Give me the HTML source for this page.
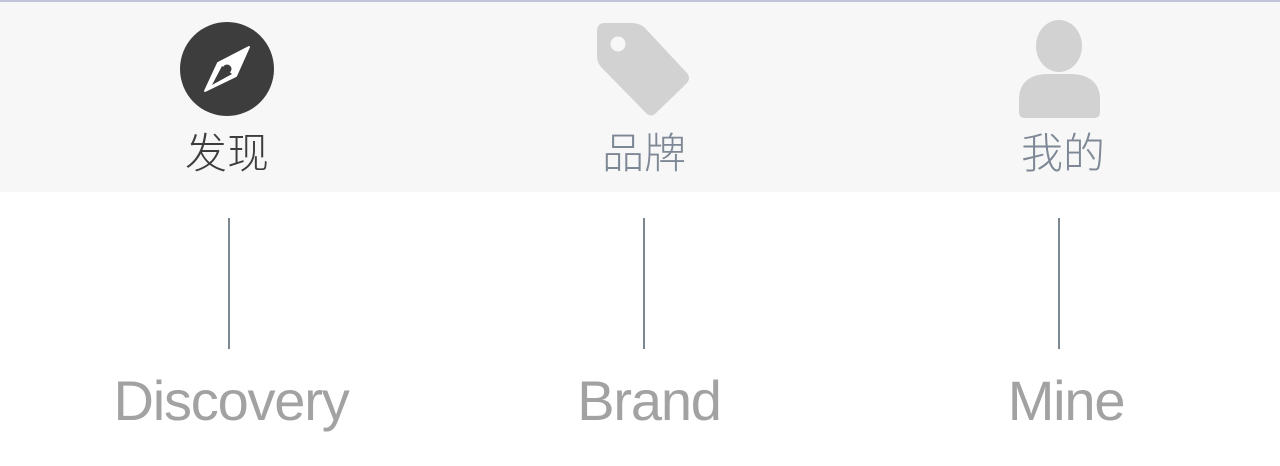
<!DOCTYPE html>
<html><head><meta charset="utf-8"><style>
body{margin:0;width:1280px;height:466px;background:#fff;position:relative;overflow:hidden;font-family:"Liberation Sans","Noto Sans CJK SC",sans-serif}
.bar{position:absolute;left:0;top:0;width:1280px;height:192px;background:#f7f7f7;border-top:2px solid #c4c4d8;box-sizing:border-box}
.cn{position:absolute;top:124px;font-size:42px;width:200px;text-align:center;line-height:60px;font-weight:300}
.en{position:absolute;top:366px;font-size:56px;width:400px;text-align:center;color:#a2a2a2;line-height:70px;letter-spacing:-1.2px}
.ln{position:absolute;top:218px;width:2px;height:131px;background:#7d8790}
</style></head><body>
<div class="bar"></div>
<svg width="1280" height="192" style="position:absolute;left:0;top:0">
<circle cx="227" cy="69" r="47" fill="#3d3d3d"/>
<path d="M249 47 L218 63 L205 91 L236 76 Z" fill="#fff" stroke="#fff" stroke-width="2" stroke-linejoin="round"/>
<path d="M212 85 L222 66 L232 74 Z" fill="#3d3d3d"/>
<circle cx="227" cy="69" r="4.5" fill="#3d3d3d"/>
<path d="M605 23 L632 23 Q640 23 645 28 L686 72 Q692 78 686 84 L656 113 Q651 118 646 113 L602 68 Q597 63 597 56 L597 31 Q597 23 605 23 Z" fill="#d2d2d2"/>
<circle cx="618" cy="44" r="7.5" fill="#f7f7f7"/>
<ellipse cx="1059" cy="46" rx="23" ry="26" fill="#d2d2d2"/>
<path d="M1019 100 Q1019 76 1045 74 L1073 74 Q1100 76 1100 100 L1100 112 Q1100 118 1094 118 L1025 118 Q1019 118 1019 112 Z" fill="#d2d2d2"/>
</svg>
<div class="cn" style="left:127px;color:#3d3d3d">发现</div>
<div class="cn" style="left:544px;color:#7e8795">品牌</div>
<div class="cn" style="left:963px;color:#7e8795">我的</div>
<div class="ln" style="left:228px"></div>
<div class="ln" style="left:643px"></div>
<div class="ln" style="left:1058px"></div>
<div class="en" style="left:31px">Discovery</div>
<div class="en" style="left:449px">Brand</div>
<div class="en" style="left:866px">Mine</div>
</body></html>
